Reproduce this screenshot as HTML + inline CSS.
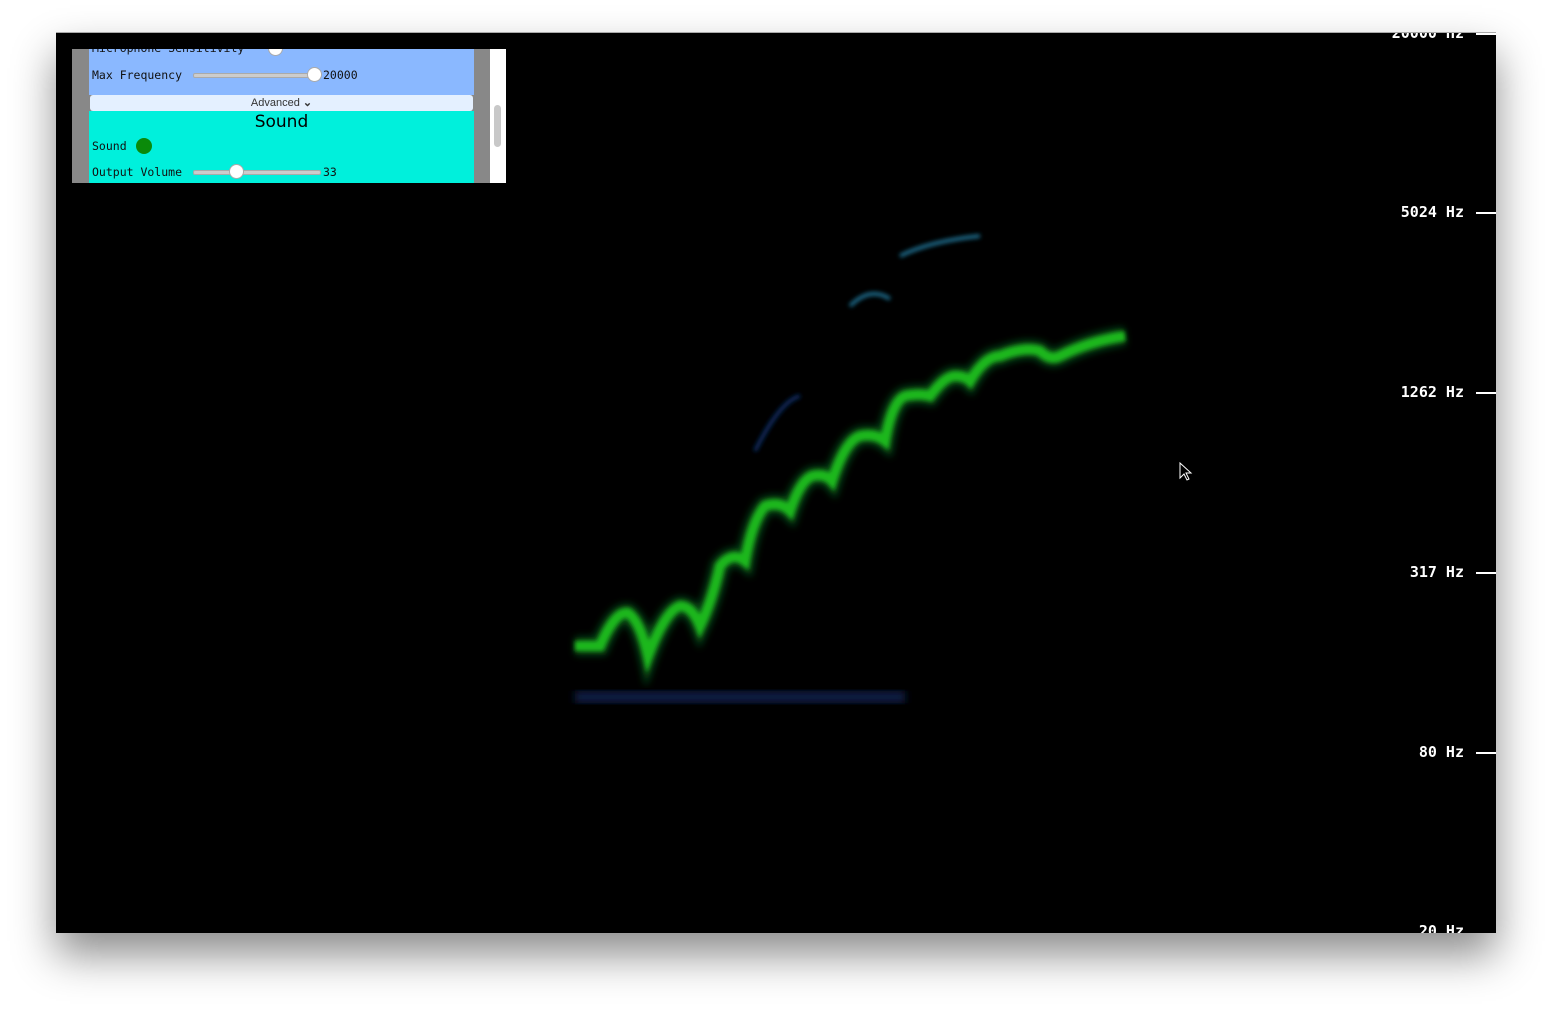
<!DOCTYPE html>
<html><head><style>
body{margin:0;width:1552px;height:1012px;background:#fff;overflow:hidden;position:relative;font-family:"DejaVu Sans Mono","Liberation Mono",monospace}
#win{position:absolute;left:56px;top:32px;width:1440px;height:900px;background:#000;box-shadow:0 22px 40px rgba(0,0,0,0.45);overflow:hidden;border-top:1px solid #aaa}
.lbl{position:absolute;right:32px;color:#fff;font-weight:bold;font-size:15px;line-height:15px}
.tick{position:absolute;right:0;width:20px;height:2px;background:#fff}
#panel{position:absolute;left:16px;top:16px;width:434px;height:134px;background:#888;overflow:hidden}
.t{position:absolute;font-size:11.5px;color:#111}
.sl{position:absolute;height:3px;background:#ccc;border:1px solid #aaa;border-radius:2px}
.kn{position:absolute;width:13px;height:13px;border-radius:50%;background:#fff;border:1px solid #aaa}
</style></head><body>
<div id="win">
<svg width="1440" height="900" style="position:absolute;left:0;top:0">
<defs><filter id="b"><feGaussianBlur stdDeviation="2"/></filter><filter id="b2"><feGaussianBlur stdDeviation="4"/></filter></defs>
<g transform="translate(-56,-32)">
<rect x="575" y="690" width="330" height="12" fill="#0a1a44" filter="url(#b2)"/>
<path d="M850,305 Q870,285 890,298 M900,255 Q930,240 980,235" stroke="#1a6a8a" stroke-width="4" fill="none" filter="url(#b)"/>
<path d="M755,450 Q780,400 800,395" stroke="#0a2a60" stroke-width="4" fill="none" filter="url(#b)"/>
<path d="M575,645 L600,645 Q615,610 628,612 Q640,620 648,655 Q665,610 680,605 Q692,605 700,625 Q712,600 720,565 Q732,550 745,560 Q752,520 765,505 Q780,500 790,510 Q800,480 812,475 Q825,472 832,480 Q845,440 860,435 Q875,432 885,440 Q892,400 905,395 Q920,392 930,395 Q945,375 955,375 Q965,375 970,380 Q985,355 1000,355 Q1025,345 1040,350 Q1050,360 1060,355 Q1090,340 1125,335" stroke="#0a6a20" stroke-width="18" fill="none" filter="url(#b2)" opacity="0.7"/>
<path d="M575,645 L600,645 Q615,610 628,612 Q640,620 648,655 Q665,610 680,605 Q692,605 700,625 Q712,600 720,565 Q732,550 745,560 Q752,520 765,505 Q780,500 790,510 Q800,480 812,475 Q825,472 832,480 Q845,440 860,435 Q875,432 885,440 Q892,400 905,395 Q920,392 930,395 Q945,375 955,375 Q965,375 970,380 Q985,355 1000,355 Q1025,345 1040,350 Q1050,360 1060,355 Q1090,340 1125,335" stroke="#1cb81c" stroke-width="10" fill="none" filter="url(#b)"/>
<path d="M1180,462 L1180,477 L1184,473 L1187,479 L1189,478 L1186,472 L1191,472 Z" fill="#000" stroke="#fff" stroke-width="1"/>
</g></svg>
<div class="lbl" style="top:-7px">20000 Hz</div><div class="tick" style="top:0px"></div>
<div class="lbl" style="top:172px">5024 Hz</div><div class="tick" style="top:179px"></div>
<div class="lbl" style="top:352px">1262 Hz</div><div class="tick" style="top:359px"></div>
<div class="lbl" style="top:532px">317 Hz</div><div class="tick" style="top:539px"></div>
<div class="lbl" style="top:712px">80 Hz</div><div class="tick" style="top:719px"></div>
<div class="lbl" style="top:891px">20 Hz</div>
<div id="panel">
<div style="position:absolute;left:17px;top:0;width:385px;height:46px;background:#8ab8ff"></div>
<div class="t" style="left:20px;top:-8px">Microphone Sensitivity</div>
<div class="kn" style="left:196px;top:-8px"></div>
<div class="t" style="left:20px;top:19px">Max Frequency</div>
<div class="sl" style="left:121px;top:24px;width:120px"></div>
<div class="kn" style="left:235px;top:18px"></div>
<div class="t" style="left:251px;top:19px">20000</div>
<div style="position:absolute;left:18px;top:46px;width:383px;height:16px;background:#e4f0ff;border-radius:3px;font-family:'Liberation Sans',sans-serif;font-size:11px;color:#333;text-align:center;line-height:16px">Advanced <b>&#8964;</b></div>
<div style="position:absolute;left:17px;top:62px;width:385px;height:72px;background:#00f0dc"></div>
<div style="position:absolute;left:17px;top:63px;width:385px;text-align:center;font-family:'DejaVu Sans',sans-serif;font-size:17px;color:#000">Sound</div>
<div class="t" style="left:20px;top:90px">Sound</div>
<div style="position:absolute;left:64px;top:89px;width:16px;height:16px;border-radius:50%;background:#0a8a0a"></div>
<div class="t" style="left:20px;top:116px">Output Volume</div>
<div class="sl" style="left:121px;top:121px;width:126px"></div>
<div class="kn" style="left:157px;top:115px"></div>
<div class="t" style="left:251px;top:116px">33</div>
<div style="position:absolute;left:418px;top:0;width:16px;height:134px;background:#fff"></div>
<div style="position:absolute;left:422px;top:56px;width:7px;height:42px;background:#c8c8c8;border-radius:4px"></div>
</div>
</div>
</body></html>
